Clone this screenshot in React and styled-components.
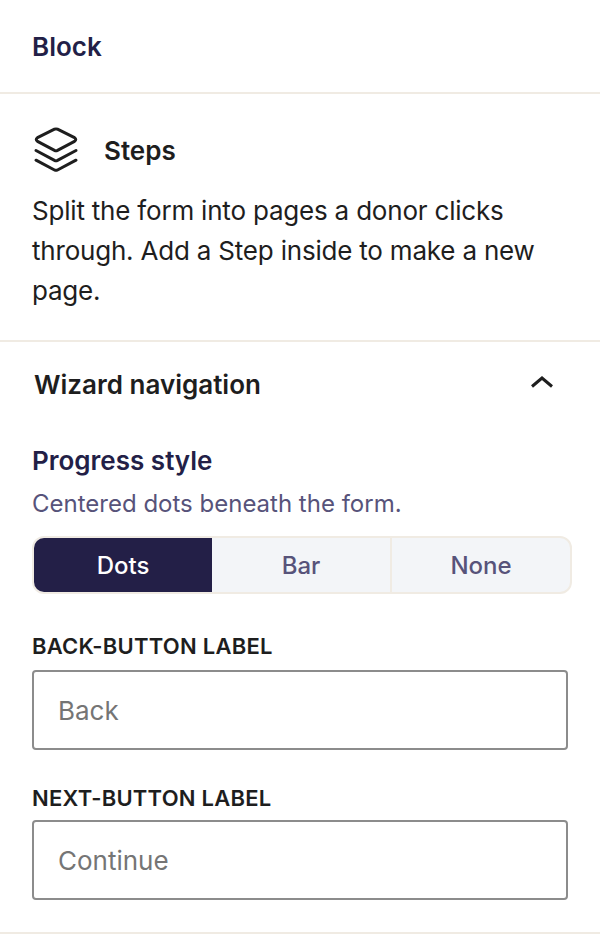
import React from 'react';
import styled, { createGlobalStyle } from 'styled-components';

const GlobalStyle = createGlobalStyle`
    html, body {
        margin: 0;
        padding: 0;
        background: #fff;
    }
    body {
        font-family: Inter, "Liberation Sans", sans-serif;
        color: #1e1e1e;
    }
    * {
        box-sizing: border-box;
    }
`;

const options = ['Dots', 'Bar', 'None'];

const StackIcon = () => (
    <svg width="48" height="48" viewBox="0 0 48 48" fill="none" stroke="#1e1e1e" strokeWidth="3" strokeLinejoin="round" strokeLinecap="round">
        <path d="M22.5 3.2 Q24 2.6 25.5 3.2 L42.5 11.6 Q45 13.5 42.5 15.4 L25.5 24.3 Q24 25 22.5 24.3 L5.5 15.4 Q3 13.5 5.5 11.6 Z" />
        <path d="M4 24.5 L22.5 34.3 Q24 35 25.5 34.3 L44 24.5" />
        <path d="M4 34.2 L22.5 44 Q24 44.7 25.5 44 L44 34.2" />
    </svg>
);

const ChevronUp = () => (
    <svg width="22" height="12" viewBox="0 0 22 12" fill="none" stroke="#1e1e1e" strokeWidth="3">
        <path d="M1 10.5 L11 2 L21 10.5" />
    </svg>
);

export default function App() {
    return (
        <Panel>
            <GlobalStyle />
            <HeaderSection>
                <Title>Block</Title>
            </HeaderSection>
            <BlockSection>
                <BlockHead>
                    <StackIcon />
                    <BlockName>Steps</BlockName>
                </BlockHead>
                <BlockText>Split the form into pages a donor clicks through. Add a Step inside to make a new page.</BlockText>
            </BlockSection>
            <NavSection>
                <NavHead>
                    <NavTitle>Wizard navigation</NavTitle>
                    <Chevron>
                        <ChevronUp />
                    </Chevron>
                </NavHead>
                <Title>Progress style</Title>
                <Hint>Centered dots beneath the form.</Hint>
                <Toggle>
                    {options.map(option => (
                        <ToggleButton key={option} $active={option === 'Dots'}>
                            {option}
                        </ToggleButton>
                    ))}
                </Toggle>
                <Field>
                    <FieldLabel>Back-button label</FieldLabel>
                    <Input placeholder="Back" />
                </Field>
                <NextField>
                    <FieldLabel>Next-button label</FieldLabel>
                    <Input placeholder="Continue" />
                </NextField>
            </NavSection>
        </Panel>
    );
}

const Panel = styled.div`
    width: 600px;
    height: 934px;
    overflow: hidden;
    background: #fff;
`;

const HeaderSection = styled.section`
    height: 94px;
    padding: 31px 32px 0;
    border-bottom: 2px solid #f0ebe3;
`;

const Title = styled.h2`
    margin: 0;
    color: #231f47;
    font-size: 26px;
    line-height: 32px;
    font-weight: 600;
`;

const BlockSection = styled.section`
    height: 248px;
    padding: 32px 32px 0;
    border-bottom: 2px solid #f0ebe3;
`;

const BlockHead = styled.div`
    display: flex;
    align-items: center;
    gap: 24px;
    height: 48px;
`;

const BlockName = styled.span`
    font-size: 26px;
    font-weight: 600;
`;

const BlockText = styled.p`
    margin: 17px 0 0;
    font-size: 26px;
    line-height: 40px;
    letter-spacing: -0.2px;
`;

const NavSection = styled.section`
    height: 592px;
    padding: 0 32px;
    border-bottom: 2px solid #f0ebe3;
`;

const NavHead = styled.div`
    display: flex;
    align-items: center;
    justify-content: space-between;
    height: 85px;
    margin-bottom: 18px;
    padding: 0 15px 0 2px;
`;

const NavTitle = styled.h3`
    margin: 0;
    font-size: 26px;
    font-weight: 600;
`;

const Chevron = styled.span`
    display: flex;
    margin-bottom: 6px;
`;

const Hint = styled.p`
    margin: 11px 0 16px;
    color: #57537a;
    font-size: 24px;
    line-height: 32px;
`;

const Toggle = styled.div`
    display: flex;
    width: 540px;
    height: 58px;
    border: 2px solid #f0ebe3;
    border-radius: 12px;
    overflow: hidden;
    background: #f3f5f8;
`;

const ToggleButton = styled.button`
    flex: 1;
    padding: 0;
    border: none;
    border-right: ${props => (props.$active ? 'none' : '2px solid #f0ebe3')};
    background: ${props => (props.$active ? '#231f47' : 'transparent')};
    color: ${props => (props.$active ? '#fff' : '#57537a')};
    font-family: inherit;
    font-size: 24px;
    font-weight: 500;

    &:last-child {
        border-right: none;
    }
`;

const Field = styled.label`
    display: block;
    width: 536px;
    margin-top: 36px;
`;

const NextField = styled(Field)`
    margin-top: 32px;

    & > span {
        margin-bottom: 6px;
    }
`;

const FieldLabel = styled.span`
    display: block;
    margin-bottom: 8px;
    font-size: 22px;
    line-height: 32px;
    font-weight: 600;
    letter-spacing: 0.24px;
    text-transform: uppercase;
`;

const Input = styled.input`
    display: block;
    width: 100%;
    height: 80px;
    padding: 0 24px;
    border: 2px solid #8c8c8c;
    border-radius: 4px;
    background: #fff;
    font-family: inherit;
    font-size: 26px;

    &::placeholder {
        color: #757575;
        opacity: 1;
    }
`;
